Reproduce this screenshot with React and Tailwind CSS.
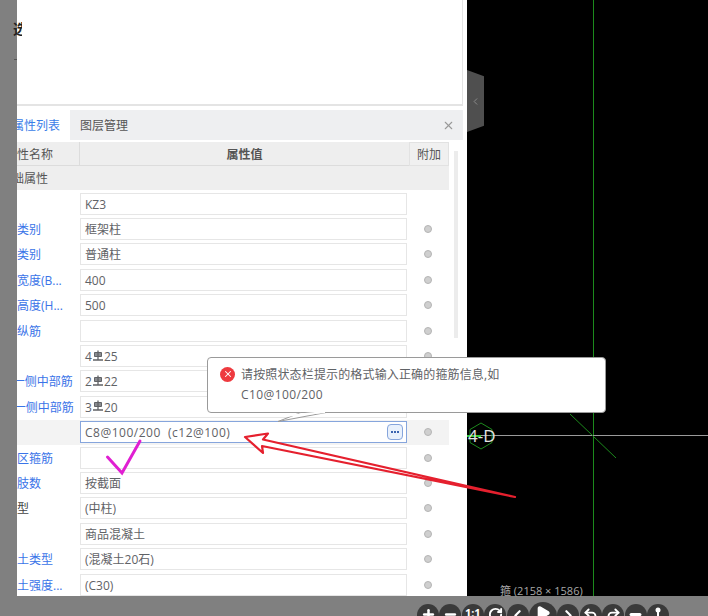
import { ChevronLeft, ChevronRight, Minus, Play, Plus, Redo2, RotateCw, Undo2, X } from "lucide-react";

const FONT = "font-['Open_Sans','Noto_Sans_CJK_SC',sans-serif]";

// Labels start left of the panel edge, the strip cuts their first characters off.
const ROWS = [
  { label: "名称", value: "KZ3", noDot: true },
  { label: "结构类别", value: "框架柱", blue: true },
  { label: "定额类别", value: "普通柱", blue: true },
  { label: "截面宽度(B...", value: "400", blue: true },
  { label: "截面高度(H...", value: "500", blue: true },
  { label: "全部纵筋", value: "", blue: true },
  { label: "角筋", count: "4", size: "25" },
  { label: "B边一侧中部筋", count: "2", size: "22", blue: true },
  { label: "H边一侧中部筋", count: "3", size: "20", blue: true },
  { label: "箍筋", value: "C8@100/200  (c12@100)", active: true },
  { label: "节点区箍筋", value: "", blue: true },
  { label: "箍筋肢数", value: "按截面", blue: true },
  { label: "柱类型", value: "(中柱)" },
  { label: "材质", value: "商品混凝土" },
  { label: "混凝土类型", value: "(混凝土20石)", blue: true },
  { label: "混凝土强度...", value: "(C30)", blue: true },
];

const TOOLS = [
  { icon: <Plus size={15} strokeWidth={4} /> },
  { icon: <Minus size={15} strokeWidth={4} /> },
  { text: "1:1" },
  { icon: <RotateCw size={15} strokeWidth={3} /> },
  { icon: <ChevronLeft size={17} strokeWidth={3} /> },
  { icon: <Play size={16} fill="white" />, big: true },
  { icon: <ChevronRight size={17} strokeWidth={3} /> },
  { icon: <Undo2 size={15} strokeWidth={3} /> },
  { icon: <Redo2 size={15} strokeWidth={3} /> },
  { icon: <Minus size={15} strokeWidth={5} /> },
  {
    icon: (
      <svg width="12" height="15" viewBox="0 0 12 15" fill="white">
        <circle cx="6" cy="3" r="2.500" />
        <rect x="5" y="3" width="2" height="12" />
      </svg>
    ),
  },
];

function RebarMark() {
  return (
    <svg width="12" height="12" viewBox="0 0 12 12" className="mb-[3px] inline-block" fill="none" stroke="#606266">
      <path d="M2.500 2.500h7v4h-7z" fill="#8a8c90" />
      <path d="M6 0.500v9M1 10h10" strokeWidth="1.300" />
    </svg>
  );
}

function PropertyRow({ row }) {
  return (
    <div className={`flex h-[25.4px] items-center ${row.active ? "bg-[#f3f3f3]" : ""}`}>
      <div
        className={`ml-[-24px] w-[87px] shrink-0 whitespace-nowrap pt-[2px] text-xs ${row.blue ? "text-[#3a74e8]" : "text-[#444]"}`}
      >
        {row.label}
      </div>
      <div
        className={`flex h-[22px] w-[327px] shrink-0 items-center whitespace-pre border bg-white pl-1 pt-[2px] text-xs text-[#5f6266] ${
          row.active ? "border-[#86a5dc] tracking-[0.5px]" : "border-[#e6e6e6]"
        }`}
      >
        {row.count ? (
          <span className="flex items-center">
            {row.count}
            <RebarMark />
            {row.size}
          </span>
        ) : (
          row.value
        )}
        {row.active && (
          <span className="mb-[2px] ml-auto mr-[3px] flex h-4 w-4 items-center justify-center gap-[1px] rounded-sm border border-[#86a5dc] bg-[#e9f1fc]">
            <i className="h-[2px] w-[2px] bg-[#3a64b0]" />
            <i className="h-[2px] w-[2px] bg-[#3a64b0]" />
            <i className="h-[2px] w-[2px] bg-[#3a64b0]" />
          </span>
        )}
      </div>
      <div className="flex w-[42px] justify-center">
        {!row.noDot && <span className="h-2 w-2 rounded-full border border-[#b5b5b5] bg-[#cfcfcf]" />}
      </div>
    </div>
  );
}

function PropertyPanel() {
  return (
    <div className="flex w-[450px] shrink-0 flex-col overflow-hidden bg-white">
      <div className="mr-1 h-[106px] shrink-0 border-r border-b-2 border-[#e4e4e4]" />
      <div className="mr-1 mt-1 flex h-[30px] shrink-0 items-center bg-[#eeeff1] text-xs text-[#555]">
        <div className="flex h-full w-[53px] items-center bg-white pt-[2px] text-[#3a7de8]">
          <span className="ml-[-5px] whitespace-nowrap">属性列表</span>
        </div>
        <span className="ml-[10px] pt-[2px]">图层管理</span>
        <X size={13} className="ml-auto mr-[8px] text-[#999]" />
      </div>
      <div className="relative flex-1">
        <div className="absolute left-[437px] top-[11px] h-[187px] w-[4px] bg-[#ececec]" />
        <div className="mt-[2px] flex h-[24px] w-[432px] text-xs font-bold text-[#555]">
          <div className="flex w-[63px] items-center border-r border-b border-[#dcdcdc] bg-[#eeeeee] pt-[2px] font-normal">
            <span className="ml-[-12px] whitespace-nowrap">属性名称</span>
          </div>
          <div className="flex w-[329px] items-center justify-center border-b border-[#dcdcdc] bg-[#eeeeee] pt-[2px]">
            属性值
          </div>
          <div className="flex w-[40px] items-center justify-center border border-[#e2e2e2] bg-[#f0f0f0] pt-[2px] font-normal">
            附加
          </div>
        </div>
        <div className="flex h-[24px] w-[432px] items-center bg-[#eeeeee] pt-[2px] text-xs text-[#555]">
          <span className="ml-[-17px] whitespace-nowrap">基础属性</span>
        </div>
        <div className="w-[432px] pt-[1px]">
          {ROWS.map((row) => (
            <PropertyRow key={row.label} row={row} />
          ))}
        </div>
      </div>
    </div>
  );
}

function Canvas() {
  return (
    <div className="relative flex-1 bg-black">
      <svg className="absolute inset-0" width="241" height="596" fill="none">
        <path d="M126.500 0V596" stroke="#1c8a1c" />
        <path d="M0 435.500H241" stroke="#9a9a9a" />
        <path d="M103 414L149 458" stroke="#1c8a1c" />
        <path d="M14 423L25 429.500V442.500L14 449L3 442.500V429.500Z" stroke="#1d8a1d" />
        <path d="M0 436H14" stroke="#35c635" strokeWidth="2" />
      </svg>
      <span className="absolute left-[1px] top-[426px] text-[17px] leading-5 text-[#e4e4e4]">4-D</span>
      <div className="absolute left-0 top-[70px] flex h-[62px] w-[17px] items-center justify-center bg-[#4f4f4f] [clip-path:polygon(0_0,100%_10%,100%_90%,0_100%)]">
        <ChevronLeft size={11} className="text-[#8f8f8f]" />
      </div>
      <span className="absolute left-[33px] top-[583px] whitespace-nowrap text-[11px] leading-4 text-[#a8a8a8]">
        箍 (2158 × 1586)
      </span>
    </div>
  );
}

function Toolbar() {
  return (
    <div className="flex h-5 shrink-0 items-start overflow-hidden bg-[#808080] pl-[417px] pt-[8px]">
      <div className="flex items-start gap-[0.4px]">
        {TOOLS.map((tool, index) => (
          <div
            key={index}
            className={`flex shrink-0 justify-center rounded-full bg-[#3a3a3a] pt-[3px] text-[11px] font-bold leading-3 text-white ${
              tool.big ? "-mt-[2px] h-[28px] w-[28px]" : "h-[22px] w-[22px]"
            }`}
          >
            {tool.icon || tool.text}
          </div>
        ))}
      </div>
    </div>
  );
}

function ErrorPopover() {
  return (
    <div className="absolute left-[207px] top-[357px] h-[56px] w-[399px] rounded-sm border border-[#9a9a9a] bg-white pl-[12px] pt-[7px]">
      <div className="flex items-center gap-[6px] text-xs leading-5 tracking-[0.15px] text-[#5f6266]">
        <span className="mb-[2px] flex h-[15px] w-[15px] items-center justify-center rounded-full bg-[#ee3a3f]">
          <X size={10} strokeWidth={2.500} className="text-white" />
        </span>
        请按照状态栏提示的格式输入正确的箍筋信息,如
      </div>
      <div className="pl-[21px] text-xs leading-5 tracking-[0.4px] text-[#5f6266]">C10@100/200</div>
    </div>
  );
}

// Hand-drawn annotations lying over the screenshot.
function Annotations() {
  return (
    <svg className="absolute inset-0" width="708" height="616" fill="none">
      <path d="M278 421.500L301 412.500H326Z" fill="white" stroke="#9a9a9a" />
      <path d="M285 416L325 412" stroke="white" strokeWidth="2" />
      <path
        d="M245 437L268 433.500L263 439.500L515 497L262 446L263 453Z"
        fill="white"
        stroke="#e5202e"
        strokeWidth="2.200"
        strokeLinejoin="round"
      />
      <path d="M107.500 457L122 473L140 441" stroke="#e01fd2" strokeWidth="3" strokeLinecap="round" />
    </svg>
  );
}

export default function App() {
  return (
    <div className={`relative flex h-[616px] w-[708px] flex-col overflow-hidden bg-[#808080] ${FONT}`}>
      <div className="flex h-[596px] shrink-0">
        <div className="relative w-[17px] shrink-0 bg-[#808080]">
          <span className="absolute left-[13px] top-[19px] z-10 w-[9px] overflow-hidden whitespace-nowrap text-sm font-bold text-[#222]">
            选
          </span>
          <span className="absolute left-[14px] top-[59px] h-px w-[3px] bg-[#555]" />
        </div>
        <PropertyPanel />
        <Canvas />
      </div>
      <Toolbar />
      <ErrorPopover />
      <Annotations />
    </div>
  );
}
